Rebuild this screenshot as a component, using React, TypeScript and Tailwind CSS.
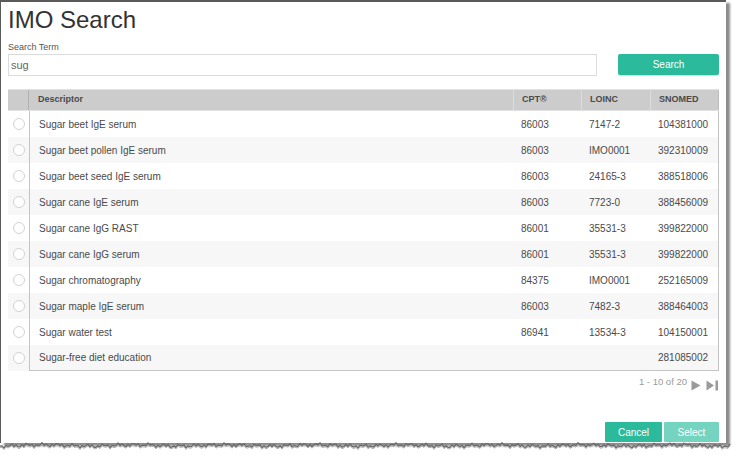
import React from 'react';

const rows = [
    ["Sugar beet IgE serum", "86003", "7147-2", "104381000"],
    ["Sugar beet pollen IgE serum", "86003", "IMO0001", "392310009"],
    ["Sugar beet seed IgE serum", "86003", "24165-3", "388518006"],
    ["Sugar cane IgE serum", "86003", "7723-0", "388456009"],
    ["Sugar cane IgG RAST", "86001", "35531-3", "399822000"],
    ["Sugar cane IgG serum", "86001", "35531-3", "399822000"],
    ["Sugar chromatography", "84375", "IMO0001", "252165009"],
    ["Sugar maple IgE serum", "86003", "7482-3", "388464003"],
    ["Sugar water test", "86941", "13534-3", "104150001"],
    ["Sugar-free diet education", "", "", "281085002"],
];

// ragged bottom edge of the cropped dialog
const tornPoints = () => {
    const pts: string[] = [];
    for (let x = 0; x <= 730; x += 2) {
        const y = 3.5 + 1.3 * Math.sin(x * 1.9) + 0.9 * Math.sin(x * 0.41) + 0.6 * Math.cos(x * 0.07);
        pts.push(`${x},${y.toFixed(1)}`);
    }
    return pts.join(" ");
};

const Radio = () => (
    <span className="block w-[12px] h-[12px] rounded-full border border-[#d2d2d2] bg-white" />
);

export default function App() {
    return (
        <div className="w-[732px] h-[455px] bg-white overflow-hidden font-['Liberation_Sans',Arial,sans-serif]">
            <div className="w-[726px] h-[443px] bg-white border-t-2 border-l border-[#5a5a5a] shadow-[4px_3px_2px_rgba(0,0,0,0.45)] flex flex-col px-[7px]">
                <h1 className="mt-[3px] text-[24px] leading-[30px] text-[#333]">IMO Search</h1>

                <label className="mt-[7px] text-[9px] leading-[11px] text-[#555]">Search Term</label>
                <div className="mt-[1px] flex gap-[21px]">
                    <div className="w-[589px] h-[22px] border border-[#dcdcdc] flex items-center px-[2px] text-[11px] text-[#666]">
                        sug
                    </div>
                    <button className="w-[101px] h-[21px] bg-[#2bbb9c] rounded-[2px] text-white text-[10px] shadow-[0_1px_1px_rgba(0,0,0,0.15)]">
                        Search
                    </button>
                </div>

                {/* table */}
                <div className="mt-[13px] flex flex-col">
                    <div className="flex h-[22px] bg-[#cccccc] border-t border-[#e2e2e2] border-b border-b-[#e0e0e0] text-[9px] font-semibold text-[#4a4a4a]">
                        <div className="w-[21px] border-r border-[#b0b0b0]" />
                        <div className="w-[484px] flex items-center pl-[9px]">Descriptor</div>
                        <div className="w-[68px] flex items-center pl-[8px] border-l border-[#dedede]">CPT®</div>
                        <div className="w-[69px] flex items-center pl-[8px] border-l border-[#dedede]">LOINC</div>
                        <div className="w-[69px] flex items-center pl-[8px] border-l border-[#dedede] border-r border-r-[#bdbdbd]">SNOMED</div>
                    </div>
                    {rows.map((r, i) => (
                        <div key={i} className={`flex h-[26px] text-[10px] text-[#4a4a4a] ${i % 2 ? 'bg-[#f7f7f7]' : 'bg-white'}`}>
                            <div className="w-[21px] flex items-center justify-center">
                                <Radio />
                            </div>
                            <div className={`flex flex-1 border-l border-r border-[#c4c4c4] ${i === rows.length - 1 ? 'border-b' : ''}`}>
                                <div className="w-[483px] flex items-center pl-[9px]">{r[0]}</div>
                                <div className="w-[68px] flex items-center pl-[8px]">{r[1]}</div>
                                <div className="w-[69px] flex items-center pl-[8px]">{r[2]}</div>
                                <div className="flex-1 flex items-center pl-[8px]">{r[3]}</div>
                            </div>
                        </div>
                    ))}
                </div>

                {/* pager */}
                <div className="mt-[4px] flex items-center justify-end h-[14px] text-[9.5px] text-[#9a9a9a]">
                    <span className="mr-[4px]">1 - 10 of 20</span>
                    <svg width="10" height="11" viewBox="0 0 10 11" className="mt-[6px]">
                        <path d="M0.5 0.5 L9.5 5.5 L0.5 10.5 Z" fill="#9a9a9a" />
                    </svg>
                    <svg width="13" height="11" viewBox="0 0 13 11" className="ml-[5px] mt-[6px]">
                        <path d="M0.5 0.5 L8 5.5 L0.5 10.5 Z" fill="#9a9a9a" />
                        <rect x="9.5" y="0.5" width="2.5" height="10" fill="#9a9a9a" />
                    </svg>
                </div>

                {/* footer */}
                <div className="mt-auto mb-[1px] flex justify-end gap-[2px]">
                    <button className="w-[57px] h-[20px] bg-[#2bbb9c] text-white text-[10px] rounded-[1px]">Cancel</button>
                    <button className="w-[55px] h-[20px] bg-[#74d4c0] text-white text-[10px] rounded-[1px]">Select</button>
                </div>
            </div>
            <svg width="732" height="8" viewBox="0 0 732 8" className="block -mt-[1px]">
                <polyline points={tornPoints()} fill="none" stroke="#6a6a6a" strokeWidth="1.4" />
                <polyline points={tornPoints()} fill="none" stroke="#b0b0b0" strokeWidth="1" transform="translate(0,1.5)" />
            </svg>
        </div>
    );
}
